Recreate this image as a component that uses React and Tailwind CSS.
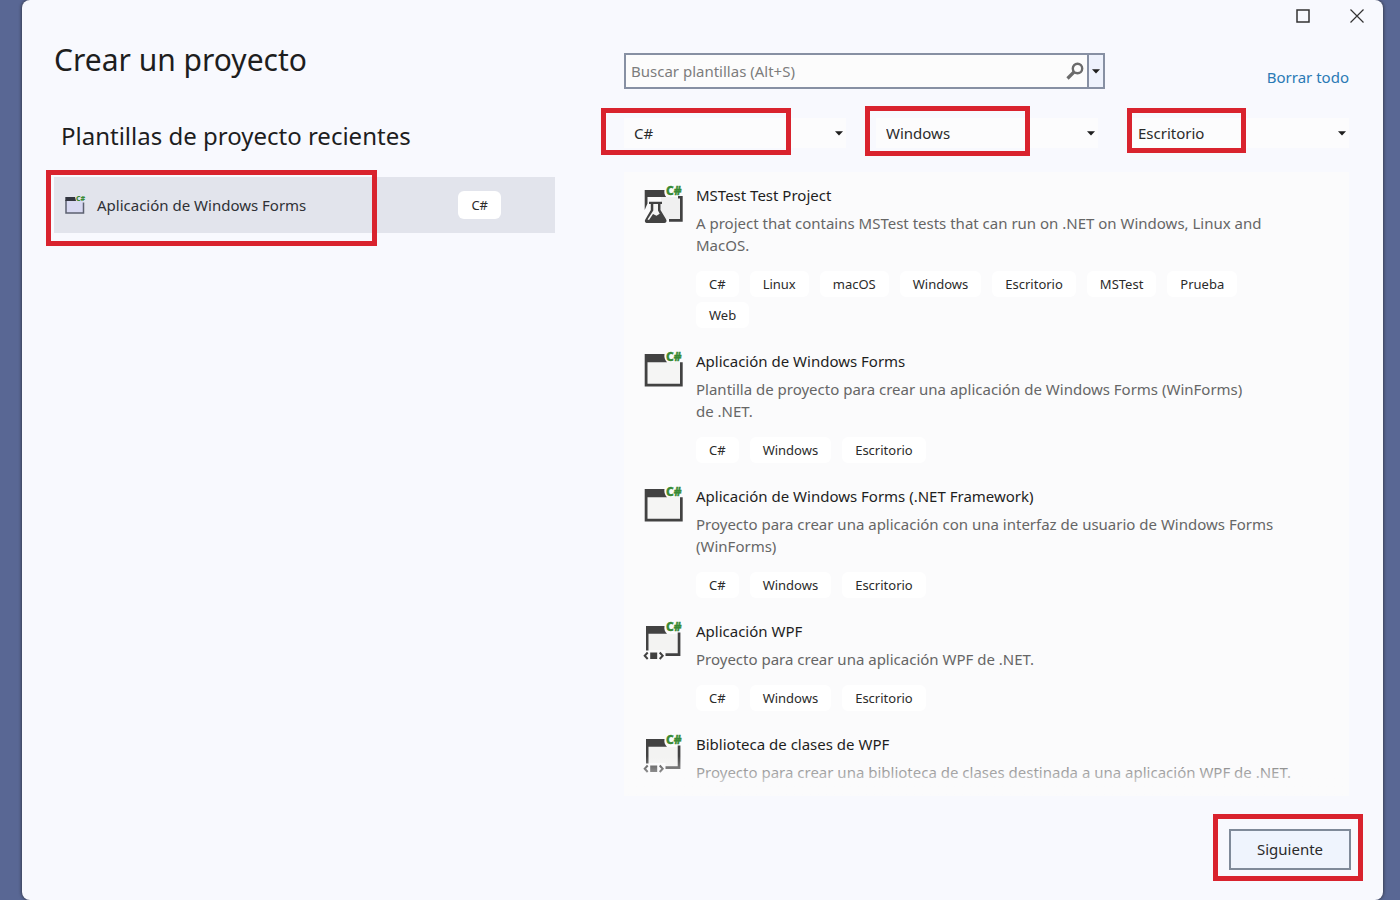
import { useState } from 'react';

const RECENT = [{ name: 'Aplicación de Windows Forms', language: 'C#' }];

const FILTERS = [
  { id: 'language', label: 'Lenguaje', options: ['C#', 'F#', 'Visual Basic'], mark: '-left-[23px] -top-[10px] w-[190px] h-[47px]' },
  { id: 'platform', label: 'Plataforma', options: ['Windows', 'Linux', 'macOS'], mark: '-left-[11px] -top-[12px] w-[165px] h-[50px]' },
  { id: 'type', label: 'Tipo de proyecto', options: ['Escritorio', 'Prueba', 'Web'], mark: '-left-px -top-[10px] w-[119px] h-[45px]' },
];

const TEMPLATES = [
  {
    name: 'MSTest Test Project',
    icon: 'test',
    description: 'A project that contains MSTest tests that can run on .NET on Windows, Linux and\nMacOS.',
    tags: ['C#', 'Linux', 'macOS', 'Windows', 'Escritorio', 'MSTest', 'Prueba', 'Web'],
  },
  {
    name: 'Aplicación de Windows Forms',
    icon: 'form',
    description: 'Plantilla de proyecto para crear una aplicación de Windows Forms (WinForms)\nde .NET.',
    tags: ['C#', 'Windows', 'Escritorio'],
  },
  {
    name: 'Aplicación de Windows Forms (.NET Framework)',
    icon: 'form',
    description: 'Proyecto para crear una aplicación con una interfaz de usuario de Windows Forms\n(WinForms)',
    tags: ['C#', 'Windows', 'Escritorio'],
  },
  {
    name: 'Aplicación WPF',
    icon: 'wpf',
    description: 'Proyecto para crear una aplicación WPF de .NET.',
    tags: ['C#', 'Windows', 'Escritorio'],
  },
  {
    name: 'Biblioteca de clases de WPF',
    icon: 'wpf',
    description: 'Proyecto para crear una biblioteca de clases destinada a una aplicación WPF de .NET.',
    tags: [],
  },
];

// Red frame that highlights a step; it hangs over its relative parent
function Mark({ className }) {
  return <span aria-hidden="true" className={`pointer-events-none absolute border-[5px] border-[#d9232e] ${className}`} />;
}

function Arrow({ className = '' }) {
  return (
    <svg className={className} width="8" height="5" viewBox="0 0 8 5" aria-hidden="true">
      <path d="M0 .3h8L4 4.6z" fill="#1e1e1e" />
    </svg>
  );
}

function TemplateIcon({ kind }) {
  return (
    <svg className="shrink-0 overflow-visible" width="42" height="42" viewBox="0 0 42 42" aria-hidden="true">
      {kind === 'form' && (
        <>
          <path d="M4 13h33v22H4z" fill="#f5f5f4" />
          <path d="M1.700 5h19.800c-.5 3 .2 5.800 2.500 8.200H4.500v21.600H37V13.200h2.700v24.300h-38z" fill="#424242" />
        </>
      )}
      {kind === 'test' && (
        <>
          <path d="M18 14h19v22H18z" fill="#f0f0f0" />
          <path d="M1.700 7h19.800c-.5 2.500 0 5 1.700 7H4.500v6.500L1.700 27z" fill="#424242" />
          <path d="M35 13h4.700v25.700H26V36h11V15.500h-2z" fill="#424242" />
          <path d="M6 18.700h13V21h-1.500v6l5.700 9.500c1 1.900-.2 3.500-2 3.500H4.300c-1.900 0-3.100-1.600-2-3.500L7.800 27v-6H6z" fill="#424242" />
          <path d="M10.300 21H15v6.500l1.700 3.300-3.200 2-3.500-1.800-4 6-1.500-.5 5.800-9z" fill="#f5f5f5" />
        </>
      )}
      {kind === 'wpf' && (
        <>
          <path d="M5.500 15h29v19h-12v-3h-17z" fill="#f3f3f2" />
          <path d="M3 7h18.500c-.5 3 .2 5.500 2.500 7.700H5.500V31.500H3z" fill="#424242" />
          <path d="M34.700 13.500h2.700V37H22.500v-2.700h12.200z" fill="#424242" />
          <path d="M7.200 33.500h7v6.500h-7z" fill="#424242" />
          <path d="M4.700 33.500L1.700 36.800l3 3.200M16.700 33.500l3 3.300-3 3.200" fill="none" stroke="#424242" strokeWidth="2" />
        </>
      )}
      <text x="23" y="12" fontSize="12" fontWeight="800" fill="#388a34" stroke="#388a34" strokeWidth=".4">C#</text>
    </svg>
  );
}

function RecentIcon() {
  return (
    <svg className="shrink-0 overflow-visible" width="22" height="20" viewBox="0 0 22 20" aria-hidden="true">
      <path d="M2 5h17v13H2z" fill="#d8d9f2" />
      <path d="M2 5v13h17.500V7.500" fill="none" stroke="#5c6070" strokeWidth="1.500" />
      <path d="M1.300 2h9.700l1 4H1.300z" fill="#333640" />
      <text x="12" y="6" fontSize="7" fontWeight="800" fill="#388a34">C#</text>
    </svg>
  );
}

function Tag({ children }) {
  return <li className="rounded-md bg-white px-[13px] text-[13px] leading-[26px] text-[#2b2b2b]">{children}</li>;
}

function Template({ item }) {
  return (
    <li className="flex gap-[11px] pb-[21px] pl-[19px]">
      <TemplateIcon kind={item.icon} />
      <div className="min-w-0 flex-1">
        <h3 className="text-[15px] leading-6 text-[#1e1e1e]">{item.name}</h3>
        <p className="mt-[5px] whitespace-pre-line text-[15px] leading-[22px] text-[#666]">{item.description}</p>
        {item.tags.length > 0 && (
          <ul className="mt-[15px] flex max-w-[560px] flex-wrap gap-x-[11px] gap-y-[5px]">
            {item.tags.map((tag) => <Tag key={tag}>{tag}</Tag>)}
          </ul>
        )}
      </div>
    </li>
  );
}

function Filter({ filter, value, onChange }) {
  return (
    <div className="relative">
      <select
        aria-label={filter.label}
        value={value}
        onChange={(e) => onChange(e.target.value)}
        className="h-[30px] w-full appearance-none bg-[#fcfcfd] px-[10px] text-[15px] text-[#2b2b2b] outline-none"
      >
        {filter.options.map((o) => <option key={o}>{o}</option>)}
      </select>
      <Arrow className="pointer-events-none absolute right-[3px] top-[13px]" />
      <Mark className={filter.mark} />
    </div>
  );
}

export default function App() {
  const [search, setSearch] = useState('');
  const [filters, setFilters] = useState({ language: 'C#', platform: 'Windows', type: 'Escritorio' });

  return (
    <div className="h-screen bg-[#596794] pl-[22px] pr-[17px] font-['Noto_Sans','Open_Sans',sans-serif]">
      <div className="flex h-full flex-col rounded-lg bg-[#f8f9fe] pl-8 pr-[34px] shadow-[0_0_3px_1px_#3c4257]">
        <div className="flex h-8 shrink-0 items-center justify-end">
          <button type="button" aria-label="Maximizar" className="flex h-8 w-[54px] items-center justify-center">
            <svg width="14" height="14" viewBox="0 0 14 14"><path d="M1 1h12v12H1z" fill="none" stroke="#333" strokeWidth="1.500" /></svg>
          </button>
          <button type="button" aria-label="Cerrar" className="-mr-[35px] flex h-8 w-[54px] items-center justify-center">
            <svg width="14" height="14" viewBox="0 0 14 14"><path d="M.5.5l13 13M13.500.5l-13 13" stroke="#333" strokeWidth="1.200" /></svg>
          </button>
        </div>

        <main className="grid min-h-0 flex-1 grid-cols-[501fr_725fr] gap-[69px]">
          <section>
            <h1 className="mt-2 text-[30px] leading-10 text-[#1e1e1e]">Crear un proyecto</h1>
            <h2 className="mt-10 pl-[7px] text-[24px] leading-8 text-[#1e1e1e]">Plantillas de proyecto recientes</h2>
            <ul className="mt-[25px]">
              {RECENT.map((item) => (
                <li key={item.name} className="relative">
                  <button type="button" className="flex h-14 w-full items-center bg-[#e2e4ec] pl-[10px] pr-[54px] text-left">
                    <RecentIcon />
                    <span className="ml-[11px] flex-1 text-[15px] text-[#2f3136]">{item.name}</span>
                    <span className="rounded-md bg-white px-[13px] text-[13px] leading-7 text-[#2b2b2b]">{item.language}</span>
                  </button>
                  <Mark className="-left-2 -top-[7px] h-[76px] w-[331px]" />
                </li>
              ))}
            </ul>
          </section>

          <section className="flex min-h-0 flex-col">
            <div className="mt-[21px] flex items-center justify-between">
              <div className="flex h-9 w-[481px] border-2 border-[#8790a3] bg-[#fcfcfc]">
                <input
                  type="text"
                  aria-label="Buscar plantillas"
                  placeholder="Buscar plantillas (Alt+S)"
                  value={search}
                  onChange={(e) => setSearch(e.target.value)}
                  className="min-w-0 flex-1 px-[5px] pt-px text-[15px] text-[#1e1e1e] outline-none placeholder:text-[#7d7d7d]"
                />
                <button type="button" aria-label="Buscar" className="flex w-6 items-center justify-center">
                  <svg width="18" height="18" viewBox="0 0 18 18">
                    <circle cx="11.500" cy="6.500" r="4.700" fill="none" stroke="#6b6b6b" strokeWidth="2.400" />
                    <path d="M8 10l-6.500 6.500" stroke="#6b6b6b" strokeWidth="3.200" />
                  </svg>
                </button>
                <button type="button" aria-label="Búsquedas recientes" className="flex w-4 items-center justify-center border-l-2 border-[#8790a3] bg-[#eef2fc]">
                  <Arrow />
                </button>
              </div>
              <a href="#" className="mt-3 text-[15px] leading-6 text-[#2a7ab5]">Borrar todo</a>
            </div>

            <div className="mt-[29px] grid grid-cols-[222fr_222fr_221fr] gap-[30px]">
              {FILTERS.map((f) => (
                <Filter
                  key={f.id}
                  filter={f}
                  value={filters[f.id]}
                  onChange={(v) => setFilters((prev) => ({ ...prev, [f.id]: v }))}
                />
              ))}
            </div>

            <div className="relative mt-6 min-h-0 flex-1 overflow-hidden bg-[#fbfbfc]">
              <ul className="pt-[11px]">
                {TEMPLATES.map((item) => <Template key={item.name} item={item} />)}
              </ul>
              <div className="pointer-events-none absolute inset-x-0 bottom-0 h-10 bg-linear-to-b from-[#fbfbfc]/0 to-[#fbfbfc]" />
            </div>
          </section>
        </main>

        <footer className="flex shrink-0 justify-end pb-[30px] pt-[33px]">
          <div className="relative -mr-[2px]">
            <button type="button" className="h-[41px] w-[122px] border-2 border-[#7f8a99] bg-[#eff4fd] text-[15px] text-[#2b2b2b]">
              Siguiente
            </button>
            <Mark className="-left-4 -top-[15px] h-[67px] w-[150px]" />
          </div>
        </footer>
      </div>
    </div>
  );
}
